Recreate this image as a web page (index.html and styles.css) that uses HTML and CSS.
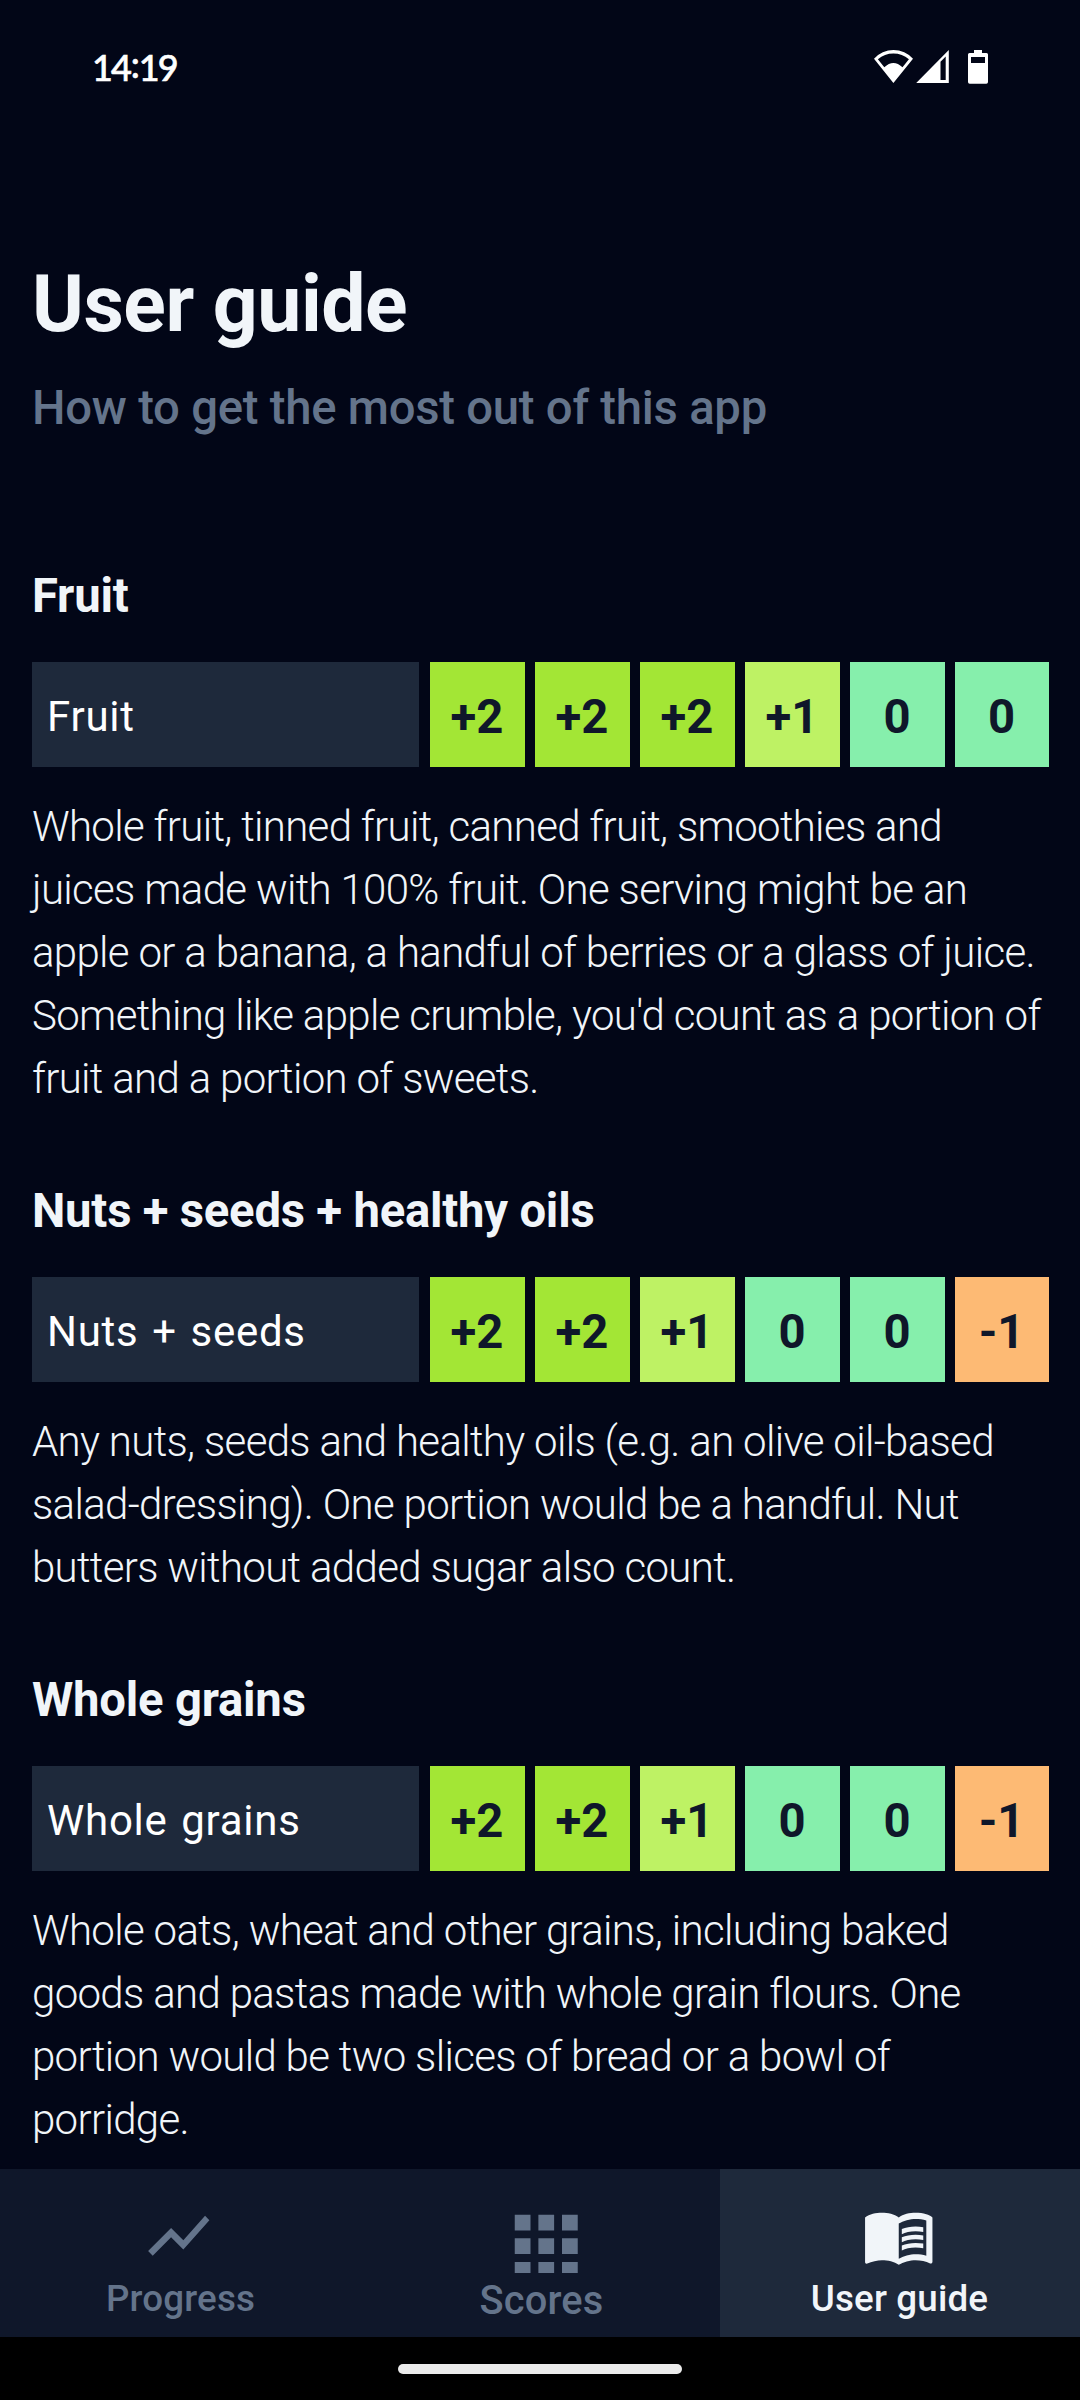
FILE: index.html
```html
<!DOCTYPE html>
<html lang="en">
<head>
<meta charset="utf-8">
<title>User guide</title>
<link rel="stylesheet" href="styles.css">
</head>
<body>
<div class="screen">
  <header class="status">
    <span class="clock">14<span class="colon">:</span>19</span>
    <svg class="status-icons" width="116" height="38" viewBox="0 0 116 38" fill="#fff">
      <path fill-rule="evenodd" d="M2 10.700A26.200 26.200 0 0 1 41 10.700L21.400 35zM5.900 11.300L12.300 19.300Q21.400 10.700 30.500 19.300L36.900 11.300A23.500 23.500 0 0 0 5.900 11.300z"/>
      <path fill-rule="evenodd" d="M76.800 2v33H44.200zM68.500 13.800v18.200h5.200V8.600z"/>
      <path fill-rule="evenodd" d="M102 2h8v3h4.500q1.500 0 1.500 1.500v27.500q0 1.700-1.700 1.700H97.700q-1.700 0-1.700-1.700V6.500q0-1.500 1.500-1.500h4.500zM99 9v6h14V9z"/>
    </svg>
  </header>
  <main class="guide">
    <h1 class="title">User guide</h1>
    <p class="subtitle">How to get the most out of this app</p>

    <section class="food">
      <h2 class="food-name">Fruit</h2>
      <div class="scores">
        <div class="label">Fruit</div>
        <div class="score great">+2</div><div class="score great">+2</div><div class="score great">+2</div>
        <div class="score good">+1</div><div class="score neutral">0</div><div class="score neutral">0</div>
      </div>
      <p class="text">Whole fruit, tinned fruit, canned fruit, smoothies and<br>juices made with 100% fruit. One serving might be an<br>apple or a banana, a handful of berries or a glass of juice.<br>Something like apple crumble, you'd count as a portion of<br>fruit and a portion of sweets.</p>
    </section>

    <section class="food">
      <h2 class="food-name">Nuts + seeds + healthy oils</h2>
      <div class="scores">
        <div class="label">Nuts + seeds</div>
        <div class="score great">+2</div><div class="score great">+2</div><div class="score good">+1</div>
        <div class="score neutral">0</div><div class="score neutral">0</div><div class="score bad">-1</div>
      </div>
      <p class="text">Any nuts, seeds and healthy oils (e.g. an olive oil-based<br>salad-dressing). One portion would be a handful. Nut<br>butters without added sugar also count.</p>
    </section>

    <section class="food">
      <h2 class="food-name">Whole grains</h2>
      <div class="scores">
        <div class="label">Whole grains</div>
        <div class="score great">+2</div><div class="score great">+2</div><div class="score good">+1</div>
        <div class="score neutral">0</div><div class="score neutral">0</div><div class="score bad">-1</div>
      </div>
      <p class="text">Whole oats, wheat and other grains, including baked<br>goods and pastas made with whole grain flours. One<br>portion would be two slices of bread or a bowl of<br>porridge.</p>
    </section>
  </main>
  <nav class="tabs">
    <div class="tab">
      <svg class="icon" viewBox="0 0 24 24"><path d="M3.500 18.490l6-6.010 4 4L22 6.920l-1.410-1.410-7.090 7.970-4-4L2 16.990z"/></svg>
      <span class="tab-name">Progress</span>
    </div>
    <div class="tab tab-scores">
      <svg class="icon icon-grid" viewBox="0 0 24 18.670"><path d="M4 4h4v4H4zM10 4h4v4h-4zM16 4h4v4h-4zM4 10h4v4H4zM10 10h4v4h-4zM16 10h4v4h-4zM4 16h4v4H4zM10 16h4v4h-4zM16 16h4v4h-4z"/></svg>
      <span class="tab-name">Scores</span>
    </div>
    <div class="tab active">
      <svg class="icon" viewBox="0 0 24 24"><path d="M21 5c-1.110-.35-2.330-.5-3.500-.5-1.950 0-4.050.4-5.500 1.500-1.450-1.100-3.550-1.500-5.500-1.500S2.450 4.900 1 6v14.650c0 .25.25.5.5.5.1 0 .15-.05.25-.05C3.100 20.450 5.050 20 6.500 20c1.950 0 4.050.4 5.500 1.500 1.350-.85 3.800-1.500 5.500-1.500 1.650 0 3.350.3 4.750 1.050.1.050.15.050.25.050.25 0 .5-.25.5-.5V6c-.6-.45-1.250-.75-2-1zm0 13.500c-1.100-.35-2.300-.5-3.500-.5-1.700 0-4.150.65-5.500 1.500V8c1.350-.85 3.800-1.500 5.500-1.500 1.200 0 2.400.15 3.500.5v11.500z"/><path d="M17.500 10.500c.88 0 1.730.09 2.500.26V9.240c-.79-.15-1.640-.24-2.500-.24-1.700 0-3.240.29-4.500.83v1.660c1.130-.64 2.700-.99 4.500-.99zM13 12.490v1.660c1.130-.64 2.700-.99 4.500-.99.88 0 1.730.09 2.500.26V11.900c-.79-.15-1.640-.24-2.500-.24-1.700 0-3.240.3-4.500.83zM17.500 14.330c-1.700 0-3.240.29-4.500.83v1.660c1.130-.64 2.700-.99 4.500-.99.88 0 1.730.09 2.500.26v-1.520c-.79-.16-1.640-.24-2.500-.24z"/></svg>
      <span class="tab-name">User guide</span>
    </div>
  </nav>
  <footer class="system-bar"><div class="handle"></div></footer>
</div>
</body>
</html>
```
FILE: styles.css
```css
* {
  box-sizing: border-box;
}

body,
h1,
h2,
p {
  margin: 0;
}

.screen {
  display: flex;
  flex-direction: column;
  width: 1080px;
  height: 2400px;
  overflow: hidden;
  background: #020617;
  color: #f1f5f9;
  font-family: Roboto, sans-serif;
}

.status {
  display: flex;
  flex: none;
  justify-content: space-between;
  align-items: flex-start;
  height: 257px;
  padding: 48px 92px 0 92px;
}

.clock {
  display: flex;
  color: #fff;
  font: 500 36px/38px Lato, sans-serif;
  letter-spacing: -2px;
  -webkit-text-stroke: 0.6px #fff;
}

.colon {
  margin: -3px 1px 0;
}

.guide {
  flex: 1;
  min-height: 0;
  padding: 0 31px 0 32px;
  overflow: hidden;
  white-space: nowrap;
}

.title {
  font-size: 78.75px;
  font-weight: 700;
  line-height: 94.5px;
  letter-spacing: -0.5px;
}

.subtitle {
  margin: 20px 0 114px;
  color: #64748b;
  font-size: 47.25px;
  font-weight: 500;
  line-height: 73.5px;
  letter-spacing: -0.25px;
}

.food {
  margin-bottom: 64px;
}

.food-name {
  font-size: 47.25px;
  font-weight: 700;
  line-height: 75px;
  letter-spacing: -0.22px;
}

.scores {
  display: grid;
  grid-template-columns: 388px repeat(5, 95px) 94px;
  column-gap: 10px;
  height: 105px;
  margin: 28px 0;
}

.label,
.score {
  height: 105px;
  padding-top: 2px;
  line-height: 105px;
}

.label {
  width: 387px;
  padding-left: 15px;
  background: #1e293b;
  color: #fff;
  font-size: 42px;
  letter-spacing: 0.75px;
  word-spacing: 2.5px;
}

.score {
  padding: 3px 1px 0 0;
  color: #0f172a;
  font-size: 47.25px;
  font-weight: 700;
  text-align: center;
}

.great { background: #a3e635; }
.good { background: #bef264; }
.neutral { background: #86efac; }
.bad { background: #fdba74; }

.text {
  font-size: 42px;
  font-weight: 300;
  line-height: 63px;
  letter-spacing: -0.68px;
}

.tabs {
  display: grid;
  flex: none;
  grid-template-columns: repeat(3, 360px);
  height: 168px;
  background: #0f172a;
  color: #64748b;
}

.tab {
  display: flex;
  flex-direction: column;
  align-items: center;
  padding: 30px 2px 0 0;
  font-size: 36.75px;
  font-weight: 500;
  line-height: 52px;
  letter-spacing: 0.15px;
}

.tab-name {
  margin-left: 3px;
}

.active .tab-name {
  margin-left: 1px;
}

.tab-scores {
  padding-right: 0;
  font-size: 39.8px;
  line-height: 55px;
}

.active {
  background: #1e293b;
  color: #f1f5f9;
}

.icon {
  width: 73.5px;
  height: 73.5px;
  fill: currentColor;
}

.icon-grid {
  width: 94.5px;
  margin-left: 12px;
}

.system-bar {
  display: flex;
  flex: none;
  justify-content: center;
  height: 63px;
  padding-top: 27px;
  background: #000;
}

.handle {
  width: 284px;
  height: 10px;
  border-radius: 5px;
  background: #ebebeb;
}
```
